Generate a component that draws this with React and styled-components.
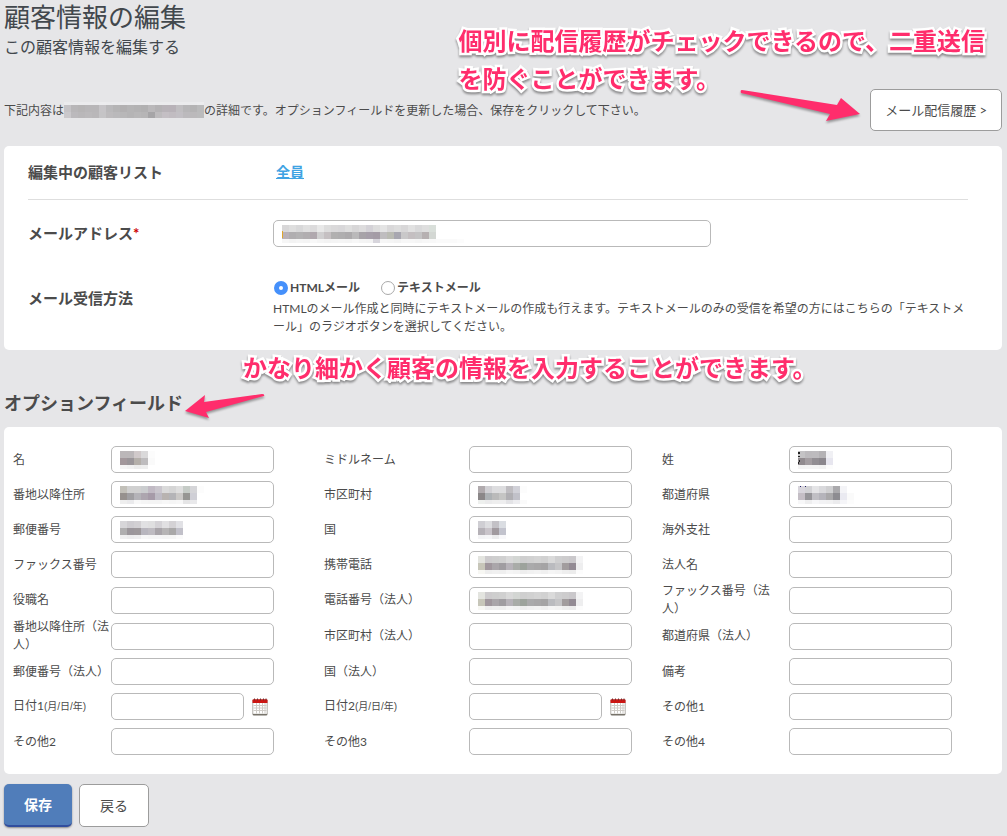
import React, { useId } from 'react';
import styled, { createGlobalStyle } from 'styled-components';

const Global = createGlobalStyle`
  *, *::before, *::after { box-sizing: border-box; }
  body {
    margin: 0;
    background: #e6e6e8;
    color: #4b4b4b;
    font: 12px/18px Lato, "Noto Sans CJK JP", sans-serif;
  }
  input, button { font: inherit; color: inherit; }
`;

const Page = styled.main`
  position: relative;
  padding: 0 5px 8px 4px;
`;
const Title = styled.h1`
  margin: 0;
  font-size: 26px;
  line-height: 34px;
  font-weight: 400;
  color: #42484d;
`;
const Subtitle = styled.p`
  margin: 0 0 30px;
  font-size: 16px;
  line-height: 25px;
  color: #42484d;
`;
const Intro = styled.div`
  display: flex;
  align-items: center;
  justify-content: space-between;
  margin-bottom: 15px;
`;
const IntroText = styled.p`
  margin: 2px 0 0;
`;
const Button = styled.button`
  height: ${(p) => (p.$small ? '43px' : '42px')};
  padding: 0 ${(p) => (p.$small ? '20px' : '14px')};
  font-size: ${(p) => (p.$small ? '14px' : '13px')};
  white-space: nowrap;
  border: 1px solid #9c9c9c;
  border-radius: 5px;
  background: #fff;
`;
const SaveButton = styled(Button)`
  border: 0;
  border-bottom: 2px solid #314e9e;
  background: #507dba;
  color: #fff;
  font-weight: 700;
  box-shadow: 0 1px 2px rgba(0, 0, 0, 0.4);
`;
const Card = styled.section`
  background: #fff;
  border-radius: 5px;
`;
const Profile = styled(Card)`
  padding: 0 34px 14px 24px;
`;
const ProfileRow = styled.div`
  display: grid;
  grid-template-columns: 245px 1fr;
  align-items: ${(p) => (p.$top ? 'start' : 'center')};
  min-height: ${(p) => p.$height};
  padding-top: ${(p) => (p.$top ? '12px' : '0')};
  border-bottom: ${(p) => (p.$line ? '1px solid #dedede' : '0')};
`;
const RowLabel = styled.label`
  padding-bottom: 2px;
  font-size: 15px;
  line-height: 38px;
  font-weight: 700;
`;
const Required = styled.span`
  color: #c00;
`;
const ListLink = styled.a`
  margin-left: 3px;
  font-size: 14px;
  font-weight: 700;
  color: #3fa3e3;
`;
const InputWrap = styled.div`
  position: relative;
  width: ${(p) => p.$width || '163px'};
  height: 27px;
`;
const TextInput = styled.input`
  display: block;
  width: 100%;
  height: 27px;
  padding: 0 8px;
  border: 1px solid #b9b9b9;
  border-radius: 5px;
  background: #fff;
`;
const FieldMosaic = styled.svg`
  position: absolute;
  left: 9px;
  top: 5px;
  overflow: visible;
  pointer-events: none;
`;
const InlineMosaic = styled.svg`
  vertical-align: -3px;
`;
const RadioGroup = styled.div`
  display: flex;
  gap: 20px;
  height: 21px;
`;
const RadioLabel = styled.label`
  display: flex;
  gap: 2px;
  height: 18px;
  align-items: center;
  font-weight: 700;
`;
const Radio = styled.input`
  appearance: none;
  width: 14px;
  height: 14px;
  margin: 0 0 0 1px;
  border: 1px solid #a9a9a9;
  border-radius: 50%;
  background: #fff;
  &:checked {
    border: 5px solid #4590fb;
  }
`;
const Help = styled.p`
  margin: 0;
`;
const SectionTitle = styled.h2`
  margin: 0;
  padding: 40px 0 11px;
  font-size: 18px;
  line-height: 26px;
  font-weight: 700;
`;
const Fields = styled(Card)`
  display: grid;
  grid-template-columns: 98px minmax(163px, 213fr) 145px minmax(163px, 193fr) 127px minmax(163px, 204fr);
  grid-auto-rows: minmax(35px, auto);
  align-items: center;
  padding: 15px 9px;
`;
const FieldLabel = styled.label`
  max-width: 120px;
`;
const Small = styled.small`
  font-family: "Liberation Sans", "Noto Sans CJK JP", sans-serif;
  font-size: 10px;
`;
const DateControl = styled.div`
  display: flex;
  align-items: center;
  gap: 8px;
`;
const IconButton = styled.button`
  width: 16px;
  height: 18px;
  padding: 0;
  border: 0;
  background: none;
  svg { display: block; }
`;
const Actions = styled.div`
  display: flex;
  gap: 7px;
  padding-top: 10px;
`;
const Note = styled.p`
  position: absolute;
  margin: 0;
  font-size: 24px;
  line-height: 38px;
  font-weight: 700;
  color: #ff2d6c;
  -webkit-text-stroke: 5px #fff;
  paint-order: stroke fill;
  filter: drop-shadow(0 2px 1px rgba(0, 0, 0, 0.4));
  white-space: nowrap;
`;
const TopNote = styled(Note)`
  right: 22px;
  top: 22px;
`;
const FieldNote = styled(Note)`
  left: 243px;
  top: 349px;
`;
const Arrow = styled.svg`
  position: absolute;
  overflow: visible;
  pointer-events: none;
  fill: #ff2d6c;
  filter: drop-shadow(0 2px 1px rgba(0, 0, 0, 0.35));
`;
const TopArrow = styled(Arrow)`
  right: 144px;
  top: 88px;
`;
const FieldArrow = styled(Arrow)`
  left: 184px;
  top: 390px;
`;

const address = [
  'ebebed ebebed ebebed ebebed ebebed ececee ebebed ebebed ebebed ebebed ebebed ebebed ececee ebebed ebebed ebebed ebebed ebebed ebebed ececee',
  'c5c3c6 b8b6b8 b6b4b5 b8b6b8 b8b6b8 c6c4c7 bab9bb b5b4b5 b2b0b1 b5b4b5 b3b2b3 b1b0b1 bab8ba b4b2b4 b8b3b8 b8b2b8 c0bec1 b7b6b8 b4b3b4 bababb',
  'cac8cb bbb9bc b9b7b9 bbb9bb b9b7b9 c5c4c6 bdbbbd bab9bb b8b7b8 b5b4b5 b8b7b8 b6b5b6 a6a5a7 bdbbbd c4bfc4 c1bcc1 c2bfc4 bcbabd bbb9bb bbbbbc',
];
const email = [
  'd8d7d8 dedede d8d8d9 e0e0e0 dcdbdc e8e8e8 dddddd dad9da d8d7d9 dedede d7d6d7 dddcdd d4d2d7 dddddd e4e4e4 d9d8d9 dddddd d8d7d8 e1e1e1 d9d9da dedede d9dfda',
  'b9b1b8 b0aeb0 b3b2b3 b1aeb0 b0a8ae d0cfd0 c5c0c2 b1b0b0 afaeaf acaaac bab9ba a7a3a8 a69fa9 a49ca6 bfbdbf babbb3 a8a7b0 c9c8c9 c4bfc1 c4c3c4 b6b0b1 d3d7d3',
  'f6f6f6 f3f3f3 f5f5f5 f4f4f4 f8f8f8 f5f5f5 f3f3f3 f4f4f4 f5f5f5 f4f4f4 f7f7f7 f4f4f4 f3f3f3 d7d5dc f6f6f6 f5f5f5 f3f3f3 f7f7f7 f7f7f7 f5f5f5 f7f7f7 f8f8f8 fafafa fafafa fafafa fcfcfc',
];
const phone = [
  'e3e4df cdcbcd cecece d0d0d0 d9d9d9 d3d6d3 cfcfcf d1d1d1 d4d4d4 d1d1d1 dadada cfcfd0 cdcccd cac8cb f3f3f4',
  'c7c6b9 a0979d aaa6aa a09da1 b7b3b9 a9aca8 9da39c aaaaab a8a7a8 a5a4a5 babbbf c5c5c7 a29d9e 938b94 eeeeef',
  'f7f7f3 eeeeee f0f0f0 efefef f5f5f5 f3f3f3 eeeeee f1f1f1 f3f3f3 f0f0f0 f5f5f5 f3f3f3 eeeeee ececec fcfcfc',
];
const firstName = ['bbb7b9 bbb7b9 d0c9ca dad9da fcfcfc', 'a2979b 9a9599 b4afaa bebcbe fafafa', 'f4f4f4 f1f1f1 ececec eeeeee ffffff'];
const street = [
  'c2c0b9 d0d0d0 d0d0d0 cbcdcf c1bac4 cac6cd dadada d5d5d5 dedede c5cbc6 d5d5d8 fcfcfc',
  '96918e a09fa2 b4b3b8 ada6af a69ba8 bebbc4 b8b3b0 b4b4b7 cac8c6 969693 cfcfd6 ffffff',
  'eeeeee eaeaec f8f8f8 f5f5f5 f4f4f4 f4f4f4 f7f7f7 f5f5f5 f7f7f7 e5e5e6 e9e9eb ffffff',
];
const zip = [
  'd7d6d9 ceccd0 d2d0d3 e1e1e3 dfdfe0 d4d2d6 e1e0e2 d4d2d5 e1e1e5',
  'afaeaf 9b969b 9d989b b8b6be bebbc1 a8a4a9 b6b4b5 a9a8a8 c1c0c9',
  'efeff0 ececed eeeeef f7f7f7 f5f5f5 f5f5f6 f4f4f4 f5f5f5 fafafa',
];
const city = ['b0aaad d1d0d4 dddddf dddddf bfbdc1 d1d1d8 fcfcfc', '8b8788 adb1b4 bababa c5c5c4 b0afb3 c1c1c9 ffffff', 'eef0ee ebebec eeeeee eeeeef e3e3e6 ededf0 fafafa'];
const country = ['cfced3 dddde0 c3c1c6 dadde2', 'b5b1b7 c9c4ca a19a9f c2c3cd', 'f3f3f5 f5f5f7 ececed f8f8fa'];
const lastName = ['c4c3c5 bcbabd bdbbbe b4b2b5 f0f0f4', '918b8f a39da1 928e93 8b878d e7e6ef', 'f3f3f3 f4f4f4 f4f4f4 f2f2f2 fcfcfc'];
const prefecture = [
  'd8d5dc d2d2d5 e4e4e6 d9d9dc cfcfd1 aaa9ac f4f4f7 ffffff',
  'c4bec5 969599 c0bfc4 b5b4bb a9a8aa 8d8c91 eaeaf1 fafafa',
  'f7f7f8 eeeeef f6f6f8 f2f2f4 f1f1f2 ebebed f5f5f8 fcfcfc',
];

function Mosaic({ as: Shape, rows, heights = [7, 7, 4], edge }) {
  const cells = rows.map((r) => r.split(' '));
  const total = heights.reduce((a, b) => a + b, 0);
  return (
    <Shape width={cells[0].length * 7} height={total} shapeRendering="crispEdges" aria-hidden="true">
      {cells.map((row, y) =>
        row.map((color, x) => (
          <rect key={`${y}-${x}`} x={x * 7} y={heights.slice(0, y).reduce((a, b) => a + b, 0)} width="7" height={heights[y]} fill={`#${color}`} />
        ))
      )}
      {edge && <path d={edge.d} fill={edge.fill} />}
    </Shape>
  );
}

function CalendarIcon() {
  return (
    <svg width="16" height="18" viewBox="0 0 16 18" aria-hidden="true">
      <rect x="0.5" y="2" width="15" height="15.5" rx="1.5" fill="#77736a" />
      <rect x="0.5" y="1.5" width="15" height="14.5" rx="1" fill="#d5d3cf" />
      <path d="M1.5 5h13v10.5h-13z" fill="#fff" />
      <path d="M4.5 5v10.5M7.5 5v10.5M10.5 5v10.5M13 5v10.5M1.5 7.5h13M1.5 10h13M1.5 12.5h13" stroke="#cfccc7" fill="none" />
      <path d="M.5 2.2q0-1 1-1h13q1 0 1 1V5H.5z" fill="#cc1512" />
      <path d="M2.5.5v2M5.5.5v2M8.5.5v2M11.5.5v2M14 .5v2" stroke="#6e3030" fill="none" />
    </svg>
  );
}

function Field({ label, hint, mosaic, edge, date }) {
  const id = useId();
  const box = (
    <InputWrap $width={date ? '133px' : '163px'}>
      <TextInput id={id} type="text" />
      {mosaic && <Mosaic as={FieldMosaic} rows={mosaic} edge={edge} />}
    </InputWrap>
  );
  return (
    <>
      <FieldLabel htmlFor={id}>
        {label}
        {hint && <Small>{hint}</Small>}
      </FieldLabel>
      {date ? (
        <DateControl>
          {box}
          <IconButton type="button" aria-label={label}>
            <CalendarIcon />
          </IconButton>
        </DateControl>
      ) : (
        box
      )}
    </>
  );
}

const fields = [
  { label: '名', mosaic: firstName },
  { label: 'ミドルネーム' },
  { label: '姓', mosaic: lastName, edge: { d: 'M0 1h2v2h-2zM0 5h2v1h-2zM1 9h1v2h-1zM0 11h1v2h-1z', fill: '#222' } },
  { label: '番地以降住所', mosaic: street },
  { label: '市区町村', mosaic: city },
  { label: '都道府県', mosaic: prefecture, edge: { d: 'M2 0h1v1h-1zM7 0h1v1h-1z', fill: '#226' } },
  { label: '郵便番号', mosaic: zip },
  { label: '国', mosaic: country },
  { label: '海外支社' },
  { label: 'ファックス番号' },
  { label: '携帯電話', mosaic: phone },
  { label: '法人名' },
  { label: '役職名' },
  { label: '電話番号（法人）', mosaic: phone },
  { label: 'ファックス番号（法人）' },
  { label: '番地以降住所（法人）' },
  { label: '市区町村（法人）' },
  { label: '都道府県（法人）' },
  { label: '郵便番号（法人）' },
  { label: '国（法人）' },
  { label: '備考' },
  { label: '日付1', hint: '(月/日/年)', date: true },
  { label: '日付2', hint: '(月/日/年)', date: true },
  { label: 'その他1' },
  { label: 'その他2' },
  { label: 'その他3' },
  { label: 'その他4' },
];

export default function App() {
  return (
    <Page lang="ja">
      <Global />
      <Title>顧客情報の編集</Title>
      <Subtitle>この顧客情報を編集する</Subtitle>
      <Intro>
        <IntroText>
          下記内容は
          <Mosaic as={InlineMosaic} rows={address} heights={[3, 7, 6]} />
          の詳細です。オプションフィールドを更新した場合、保存をクリックして下さい。
        </IntroText>
        <Button type="button">メール配信履歴 &gt;</Button>
      </Intro>
      <form onSubmit={(e) => e.preventDefault()}>
        <Profile>
          <ProfileRow $height="54px" $line>
            <RowLabel as="span">編集中の顧客リスト</RowLabel>
            <div>
              <ListLink href="#all">全員</ListLink>
            </div>
          </ProfileRow>
          <ProfileRow $height="67px">
            <RowLabel htmlFor="email">
              メールアドレス<Required>*</Required>
            </RowLabel>
            <InputWrap $width="438px">
              <TextInput id="email" type="email" />
              <Mosaic as={FieldMosaic} rows={email} edge={{ d: 'M0 6h1v7h-1z', fill: '#e0a52c' }} />
            </InputWrap>
          </ProfileRow>
          <ProfileRow $height="69px" $top>
            <RowLabel as="span" id="format">メール受信方法</RowLabel>
            <div>
              <RadioGroup role="radiogroup" aria-labelledby="format">
                <RadioLabel>
                  <Radio type="radio" name="format" defaultChecked />
                  HTMLメール
                </RadioLabel>
                <RadioLabel>
                  <Radio type="radio" name="format" />
                  テキストメール
                </RadioLabel>
              </RadioGroup>
              <Help>
                HTMLのメール作成と同時にテキストメールの作成も行えます。テキストメールのみの受信を希望の方にはこちらの「テキストメール」のラジオボタンを選択してください。
              </Help>
            </div>
          </ProfileRow>
        </Profile>
        <SectionTitle>オプションフィールド</SectionTitle>
        <Fields>
          {fields.map((f) => (
            <Field key={f.label} {...f} />
          ))}
        </Fields>
        <Actions>
          <SaveButton $small type="submit">保存</SaveButton>
          <Button $small type="button">戻る</Button>
        </Actions>
      </form>
      <TopNote>
        個別に配信履歴がチェックできるので、二重送信
        <br />
        を防ぐことができます。
      </TopNote>
      <TopArrow width="124" height="36" viewBox="0 0 124 36">
        <path d="M3 2 Q1 2 2 5 L91 26 L87 33 L121 26 L102 10 L98 17 Z" />
      </TopArrow>
      <FieldNote>かなり細かく顧客の情報を入力することができます。</FieldNote>
      <FieldArrow width="82" height="30" viewBox="0 0 82 30">
        <path d="M1 21 L21 5 L20 12 L78 4 Q81 4 80 6 L22 22 L25 28 Z" />
      </FieldArrow>
    </Page>
  );
}
